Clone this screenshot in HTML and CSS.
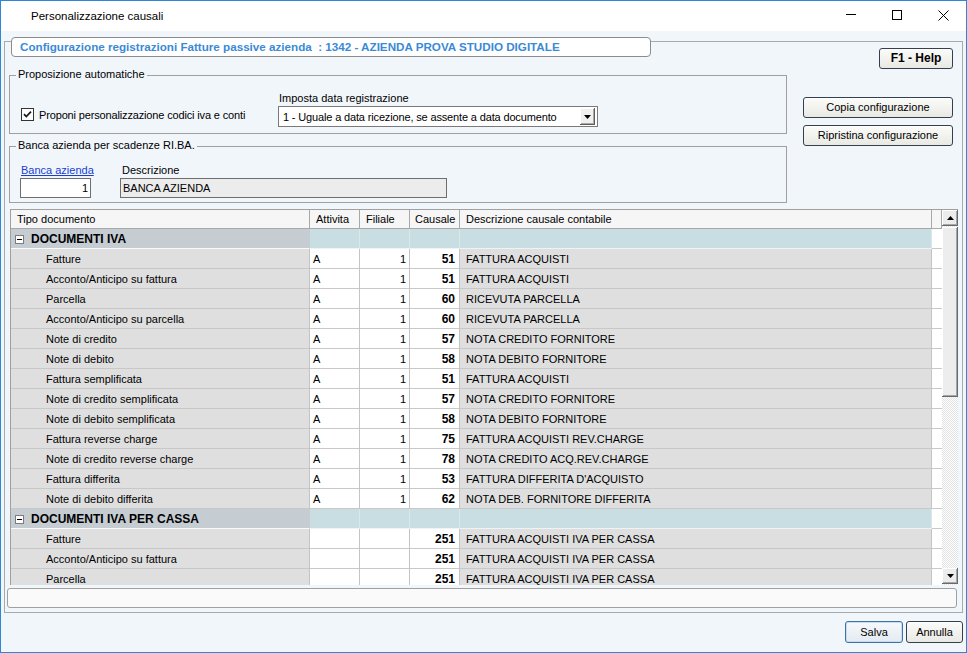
FILE: index.html
```html
<!DOCTYPE html>
<html lang="it">
<head>
<meta charset="utf-8">
<title>Personalizzazione causali</title>
<link rel="stylesheet" href="styles.css">
</head>
<body>
<div class="window">
  <div class="titlebar">
    <span class="title">Personalizzazione causali</span>
    <div class="controls">
      <span class="ctl"><svg width="10" height="10" viewBox="0 0 10 10"><path d="M0 4.5H10" stroke="#000" stroke-width="1"/></svg></span>
      <span class="ctl"><svg width="10" height="10" viewBox="0 0 10 10"><rect x="0.5" y="0.5" width="9" height="9" fill="none" stroke="#000" stroke-width="1"/></svg></span>
      <span class="ctl"><svg width="11" height="11" viewBox="0 0 11 11"><path d="M0.5 0.5L10.5 10.5M10.5 0.5L0.5 10.5" stroke="#000" stroke-width="1"/></svg></span>
    </div>
  </div>
  <div class="client">
    <div class="frame">
      <div class="top-row">
        <div class="title-box">Configurazione registrazioni Fatture passive azienda&nbsp; : 1342 - AZIENDA PROVA STUDIO DIGITALE</div>
        <button class="btn btn-help">F1 - Help</button>
      </div>
      <div class="mid">
        <div class="groups">
          <div class="group">
            <div class="legend">Proposizione automatiche</div>
            <div class="g1-body">
              <label class="check">
                <span class="box"><svg width="11" height="11" viewBox="0 0 11 11"><path d="M2 5.2L4.3 7.6L9 2.6" fill="none" stroke="#1a1a1a" stroke-width="1.7"/></svg></span>
                <span class="check-text">Proponi personalizzazione codici iva e conti</span>
              </label>
              <div class="field">
                <div class="lbl">Imposta data registrazione</div>
                <div class="select">
                  <span class="select-text">1 - Uguale a data ricezione, se assente a data documento</span>
                  <span class="drop"><svg width="7" height="4" viewBox="0 0 7 4"><path d="M0 0H7L3.5 4Z" fill="#000"/></svg></span>
                </div>
              </div>
            </div>
          </div>
          <div class="group">
            <div class="legend">Banca azienda per scadenze RI.BA.</div>
            <div class="g2-body">
              <div class="field-bank">
                <div class="lbl link">Banca azienda</div>
                <div class="input num">1</div>
              </div>
              <div class="field-desc">
                <div class="lbl lbl-desc">Descrizione</div>
                <div class="input ro">BANCA AZIENDA</div>
              </div>
            </div>
          </div>
        </div>
        <div class="side">
          <button class="btn">Copia configurazione</button>
          <button class="btn">Ripristina configurazione</button>
        </div>
      </div>
      <div class="grid">
        <div class="grid-main">
          <div class="row head">
            <div>Tipo documento</div><div>Attivita</div><div>Filiale</div><div>Causale</div><div>Descrizione causale contabile</div><div></div>
          </div>
          <div class="row grp">
            <div class="g-type"><span class="tog"><svg width="9" height="9" viewBox="0 0 9 9"><rect x="0.5" y="0.5" width="8" height="8" fill="#fff" stroke="#7d7d7d"/><path d="M2 4.5H7" stroke="#000"/></svg></span>DOCUMENTI IVA</div><div></div><div></div><div></div><div></div><div class="g-fill"></div>
          </div>
          <div class="row"><div class="c-type">Fatture</div><div class="c-att">A</div><div class="c-fil">1</div><div class="c-cau">51</div><div class="c-desc">FATTURA ACQUISTI</div><div class="c-fill"></div></div>
          <div class="row"><div class="c-type">Acconto/Anticipo su fattura</div><div class="c-att">A</div><div class="c-fil">1</div><div class="c-cau">51</div><div class="c-desc">FATTURA ACQUISTI</div><div class="c-fill"></div></div>
          <div class="row"><div class="c-type">Parcella</div><div class="c-att">A</div><div class="c-fil">1</div><div class="c-cau">60</div><div class="c-desc">RICEVUTA PARCELLA</div><div class="c-fill"></div></div>
          <div class="row"><div class="c-type">Acconto/Anticipo su parcella</div><div class="c-att">A</div><div class="c-fil">1</div><div class="c-cau">60</div><div class="c-desc">RICEVUTA PARCELLA</div><div class="c-fill"></div></div>
          <div class="row"><div class="c-type">Note di credito</div><div class="c-att">A</div><div class="c-fil">1</div><div class="c-cau">57</div><div class="c-desc">NOTA CREDITO FORNITORE</div><div class="c-fill"></div></div>
          <div class="row"><div class="c-type">Note di debito</div><div class="c-att">A</div><div class="c-fil">1</div><div class="c-cau">58</div><div class="c-desc">NOTA DEBITO FORNITORE</div><div class="c-fill"></div></div>
          <div class="row"><div class="c-type">Fattura semplificata</div><div class="c-att">A</div><div class="c-fil">1</div><div class="c-cau">51</div><div class="c-desc">FATTURA ACQUISTI</div><div class="c-fill"></div></div>
          <div class="row"><div class="c-type">Note di credito semplificata</div><div class="c-att">A</div><div class="c-fil">1</div><div class="c-cau">57</div><div class="c-desc">NOTA CREDITO FORNITORE</div><div class="c-fill"></div></div>
          <div class="row"><div class="c-type">Note di debito semplificata</div><div class="c-att">A</div><div class="c-fil">1</div><div class="c-cau">58</div><div class="c-desc">NOTA DEBITO FORNITORE</div><div class="c-fill"></div></div>
          <div class="row"><div class="c-type">Fattura reverse charge</div><div class="c-att">A</div><div class="c-fil">1</div><div class="c-cau">75</div><div class="c-desc">FATTURA ACQUISTI REV.CHARGE</div><div class="c-fill"></div></div>
          <div class="row"><div class="c-type">Note di credito reverse charge</div><div class="c-att">A</div><div class="c-fil">1</div><div class="c-cau">78</div><div class="c-desc">NOTA CREDITO ACQ.REV.CHARGE</div><div class="c-fill"></div></div>
          <div class="row"><div class="c-type">Fattura differita</div><div class="c-att">A</div><div class="c-fil">1</div><div class="c-cau">53</div><div class="c-desc">FATTURA DIFFERITA D'ACQUISTO</div><div class="c-fill"></div></div>
          <div class="row"><div class="c-type">Note di debito differita</div><div class="c-att">A</div><div class="c-fil">1</div><div class="c-cau">62</div><div class="c-desc">NOTA DEB. FORNITORE DIFFERITA</div><div class="c-fill"></div></div>
          <div class="row grp">
            <div class="g-type"><span class="tog"><svg width="9" height="9" viewBox="0 0 9 9"><rect x="0.5" y="0.5" width="8" height="8" fill="#fff" stroke="#7d7d7d"/><path d="M2 4.5H7" stroke="#000"/></svg></span>DOCUMENTI IVA PER CASSA</div><div></div><div></div><div></div><div></div><div class="g-fill"></div>
          </div>
          <div class="row"><div class="c-type">Fatture</div><div class="c-att"></div><div class="c-fil"></div><div class="c-cau">251</div><div class="c-desc">FATTURA ACQUISTI IVA PER CASSA</div><div class="c-fill"></div></div>
          <div class="row"><div class="c-type">Acconto/Anticipo su fattura</div><div class="c-att"></div><div class="c-fil"></div><div class="c-cau">251</div><div class="c-desc">FATTURA ACQUISTI IVA PER CASSA</div><div class="c-fill"></div></div>
          <div class="row"><div class="c-type">Parcella</div><div class="c-att"></div><div class="c-fil"></div><div class="c-cau">251</div><div class="c-desc">FATTURA ACQUISTI IVA PER CASSA</div><div class="c-fill"></div></div>
        </div>
        <div class="vscroll">
          <div class="sb-btn"><svg width="7" height="4" viewBox="0 0 7 4"><path d="M0 4H7L3.5 0Z" fill="#000"/></svg></div>
          <div class="sb-thumb"></div>
          <div class="sb-track"></div>
          <div class="sb-btn sb-down"><svg width="7" height="4" viewBox="0 0 7 4"><path d="M0 0H7L3.5 4Z" fill="#000"/></svg></div>
        </div>
      </div>
      <div class="status"></div>
    </div>
    <div class="actions">
      <button class="btn btn-primary">Salva</button>
      <button class="btn btn-cancel">Annulla</button>
    </div>
  </div>
</div>
</body>
</html>
```
FILE: styles.css
```css
* { box-sizing: border-box; }

body {
  margin: 0;
  font-family: "Liberation Sans", Arial, sans-serif;
  font-size: 11px;
  color: #000;
  background: #fff;
}

.window {
  width: 967px;
  height: 653px;
  border: 1px solid #2f86d8;
  display: flex;
  flex-direction: column;
  background: #f1f6fb;
}

/* title bar */
.titlebar {
  height: 30px;
  flex: none;
  background: #fff;
  display: flex;
  align-items: center;
}
.title {
  flex: 1;
  padding-left: 30px;
  font-size: 11.5px;
  padding-bottom: 1px;
}
.controls { display: flex; }
.ctl {
  width: 46px;
  height: 30px;
  display: flex;
  align-items: center;
  justify-content: center;
  padding-bottom: 2px;
}
.ctl svg { display: block; }

/* client */
.client {
  flex: 1;
  padding: 10px 2px 0 3px;
  display: flex;
  flex-direction: column;
}

.frame {
  width: 959px;
  border: 1px solid #a5aab0;
  padding-bottom: 4px;
}

.top-row {
  display: flex;
  justify-content: space-between;
  align-items: flex-start;
  margin-top: -5px;
}
.title-box {
  margin-left: 6px;
  width: 640px;
  height: 20px;
  border: 1px solid #8c8c8c;
  border-radius: 4px;
  background: #fff;
  color: #3a8ad6;
  font-weight: bold;
  font-size: 11.65px;
  line-height: 18px;
  padding-left: 8px;
  white-space: nowrap;
}

.btn {
  font-family: "Liberation Sans", Arial, sans-serif;
  font-size: 11px;
  color: #000;
  border: 1px solid #33414f;
  border-radius: 3px;
  background: linear-gradient(#fbfbf9, #e9e9e4);
  box-shadow: inset 0 1px 0 #fff;
  padding: 0;
  margin: 0;
  height: 21px;
  line-height: 19px;
}
.btn-help {
  margin-top: 11px;
  margin-right: 9px;
  width: 74px;
  font-weight: bold;
  font-size: 12px;
}

/* middle */
.mid {
  display: flex;
  margin-top: 6px;
}
.groups {
  margin-left: 4px;
  width: 778px;
  display: flex;
  flex-direction: column;
  gap: 12px;
}
.group {
  border: 1px solid #a0a0a0;
}
.legend {
  margin: -8px 0 0 6px;
  width: fit-content;
  padding: 0 2px;
  background: #f1f6fb;
  height: 14px;
  line-height: 13px;
}
.g1-body {
  display: grid;
  grid-template-columns: 257px 320px;
  align-items: end;
  padding: 10px 0 6px 11px;
}
.check {
  display: flex;
  align-items: center;
  gap: 5px;
  height: 13px;
  margin-bottom: 6px;
  white-space: nowrap;
}
.check-text { letter-spacing: -0.15px; }
.box {
  width: 13px;
  height: 13px;
  border: 1px solid #333;
  background: #fff;
  display: flex;
  align-items: center;
  justify-content: center;
}
.box svg { display: block; }
.lbl {
  height: 13px;
  line-height: 13px;
  padding-left: 1px;
  white-space: nowrap;
}
.select {
  margin-top: 1px;
  height: 21px;
  border: 1px solid #7a7a7a;
  background: #fff;
  display: flex;
  align-items: center;
  justify-content: space-between;
  padding: 0 2px 0 4px;
  white-space: nowrap;
}
.select-text { letter-spacing: -0.15px; }
.drop {
  width: 15px;
  height: 17px;
  background: #f0f0f0;
  box-shadow: inset -1px -1px #5e5e5e, inset 1px 1px #fff, inset -2px -2px #a8a8a8;
  display: flex;
  align-items: center;
  justify-content: center;
}
.drop svg { display: block; }

.g2-body {
  display: flex;
  gap: 29px;
  padding: 11px 0 4px 10px;
}
.field-bank { width: 71px; }
.field-desc { width: 327px; }
.link {
  color: #1a3fd0;
  text-decoration: underline;
}
.lbl-desc { padding-left: 2px; }
.input {
  margin-top: 1px;
  height: 20px;
  border: 1px solid #6e6e6e;
  background: #fff;
  line-height: 18px;
  white-space: nowrap;
}
.input.num {
  text-align: right;
  padding-right: 2px;
}
.input.ro {
  background: #ececec;
  padding-left: 2px;
}

.side {
  margin-left: 16px;
  width: 150px;
  display: flex;
  flex-direction: column;
  gap: 7px;
  padding-top: 22px;
}
.side .btn { width: 150px; }

/* grid */
.grid {
  margin: 6px 4px 0 5px;
  height: 376px;
  border-top: 1px solid #a0a0a0;
  border-left: 1px solid #a0a0a0;
  display: flex;
}
.grid-main {
  width: 931px;
  overflow: hidden;
  background: #fff;
}
.row {
  display: grid;
  grid-template-columns: 299px 50px 50px 50px 472px 10px;
  height: 20px;
}
.row > div {
  border-right: 1px solid #c4c4c4;
  border-bottom: 1px solid #c8c8c8;
  line-height: 20px;
  white-space: nowrap;
  overflow: hidden;
}
.head { height: 19px; }
.head > div {
  background: #f6f6f6;
  line-height: 18px;
  padding-left: 6px;
  border-right-color: #a8a8a8;
  border-bottom-color: #a8a8a8;
}
.head > div:nth-child(4) { padding-left: 5px; }

.grp > div {
  background: #c9dee2;
  border-right-color: #dbe8ea;
  border-bottom-color: #eef4f5;
}
.grp > .g-type {
  background: #c5ccd2;
  border-bottom-color: #fafafa;
  border-right-color: #c5ccd2;
  font-weight: bold;
  font-size: 12px;
  display: flex;
  align-items: center;
  gap: 7px;
  padding-left: 4px;
  padding-top: 1px;
}
.grp > .g-fill { background: #fff; border-right: 0; border-bottom-color: #c8c8c8; }
.tog { display: flex; }
.tog svg { display: block; }

.c-type {
  background: #dfdfdf;
  padding-left: 35px;
}
.c-att {
  background: #fff;
  padding-left: 3px;
}
.c-fil {
  background: #fff;
  text-align: right;
  padding-right: 3px;
}
.c-cau {
  background: #fff;
  text-align: right;
  padding-right: 4px;
  font-weight: bold;
  font-size: 12px;
}
.c-desc {
  background: #dfdfdf;
  padding-left: 6px;
}
.row > .c-fill {
  background: #fff;
  border-right: 0;
}

.vscroll {
  width: 16px;
  display: flex;
  flex-direction: column;
  background-color: #f4f4f4;
  background-image: repeating-conic-gradient(#ffffff 0 25%, #e2e2e2 0 50%);
  background-size: 2px 2px;
}
.sb-btn {
  height: 16px;
  flex: none;
  background: #ececec;
  box-shadow: inset -1px -1px #6a6a6a, inset 1px 1px #fff, inset -2px -2px #a6a6a6;
  display: flex;
  align-items: center;
  justify-content: center;
}
.sb-btn svg { display: block; }
.sb-thumb {
  margin-top: 1px;
  height: 170px;
  flex: none;
  background: #ededed;
  box-shadow: inset -1px -1px #6a6a6a, inset 1px 1px #fff, inset -2px -2px #a6a6a6;
}
.sb-track { flex: 1; }
.sb-down { margin-bottom: 1px; }

.status {
  margin: 3px 5px 0 2px;
  height: 20px;
  border: 1px solid #a0a0a0;
  border-radius: 3px;
  background: #fafafa;
}

.actions {
  display: flex;
  justify-content: flex-end;
  gap: 3px;
  margin-top: 8px;
  padding-right: 1px;
}
.actions .btn { height: 22px; line-height: 20px; }
.btn-primary {
  width: 58px;
  border-color: #3f73a6;
  background: linear-gradient(#f6f9fc, #e3eaf2);
  box-shadow: inset 0 0 0 1px #c7dcef;
}
.btn-cancel { width: 57px; }
```
